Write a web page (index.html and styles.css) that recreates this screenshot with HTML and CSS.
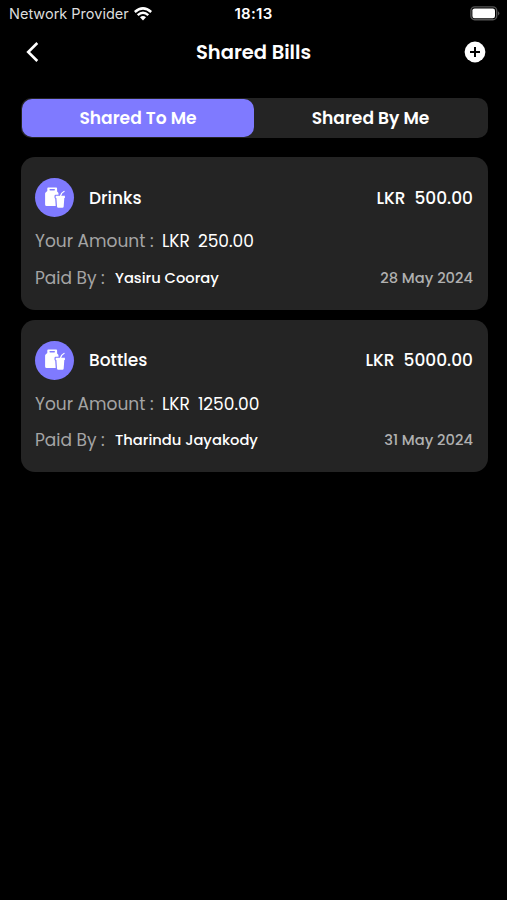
FILE: index.html
```html
<!DOCTYPE html>
<html lang="en">
<head>
  <meta charset="UTF-8">
  <meta name="viewport" content="width=device-width, initial-scale=1.0">
  <title>Shared Bills</title>
  <link rel="stylesheet" href="styles.css">
</head>
<body>

<svg class="sprite" width="0" height="0">
  <symbol id="drinkIcon" viewBox="0 0 22 22">
    <path fill="#fff" fill-rule="evenodd" d="M4.2 0.5h8q0.9 0 0.9 0.9v3l1 1.2q0.4 0.5 0.4 1.2v1h-2.8q-1.2 0-1.2 1.2v1.4q0 0.8 0.7 1.1l0.5 7.5H2.6q-1.5 0-1.5-1.5V6.8q0-0.7 0.5-1.3l1.7-1.4V1.4q0-0.9 0.9-0.9zM6.2 2.1q-0.8 0-0.8 0.7t0.8 0.7h4q0.8 0 0.8-0.7t-0.8-0.7z"/>
    <path fill="#fff" d="M11.7 8.8h9.2v2.2h-0.6l-0.6 8.5q-0.1 1.3-1.3 1.3h-4.1q-1.2 0-1.3-1.3l-0.6-8.5h-0.7z"/>
    <path fill="none" stroke="#fff" stroke-width="1.2" stroke-linecap="round" d="M16.6 8.8l1-2.4 2.5-2"/>
  </symbol>
</svg>

<div class="status-bar">
  <div class="network">
    <span class="provider">Network Provider</span>
    <svg class="wifi" viewBox="0 0 18 14" width="18" height="14" fill="none" stroke="#fff" stroke-width="2.5">
      <path d="M0.8 5Q9-2.2 17.2 5"/>
      <path d="M3.7 8.1Q9 3.4 14.3 8.1"/>
      <path fill="#fff" stroke="none" d="M6 10.2q3-2.5 6 0l-3 3.4z"/>
    </svg>
  </div>
  <span class="time">18:13</span>
  <svg class="battery" viewBox="0 0 31 15" width="31" height="15">
    <rect x="1.9" y="0.9" width="25.8" height="12.8" rx="3.8" fill="none" stroke="#555" stroke-width="1.4"/>
    <rect x="3.4" y="2.4" width="22.6" height="9.8" rx="2.2" fill="#fff"/>
    <path d="M29 5.2q2.8 2.2 0 4.4z" fill="#555"/>
  </svg>
</div>

<div class="header">
  <svg class="back" viewBox="0 0 14 22" width="14" height="22">
    <path d="M12.3 2L3.2 11l9.1 9" fill="none" stroke="#fff" stroke-width="2.6"/>
  </svg>
  <h1>Shared Bills</h1>
  <svg class="add" viewBox="0 0 22 22" width="22" height="22">
    <circle cx="11" cy="11" r="10.4" fill="#fff"/>
    <path d="M11 6v10M6 11h10" stroke="#000" stroke-width="2"/>
  </svg>
</div>

<div class="tabs">
  <div class="tab active">Shared To Me</div>
  <div class="tab">Shared By Me</div>
</div>

<div class="bills">
  <div class="bill">
    <div class="bill-top">
      <div class="bill-icon"><svg width="22" height="22"><use href="#drinkIcon"/></svg></div>
      <span class="bill-name">Drinks</span>
      <span class="bill-total"><span>LKR</span><span>500.00</span></span>
    </div>
    <div class="bill-row">
      <span class="amount-label">Your Amount :</span>
      <span class="amount"><span>LKR</span><span>250.00</span></span>
    </div>
    <div class="bill-row">
      <span class="paid-label">Paid By :</span>
      <span class="payer">Yasiru Cooray</span>
      <span class="date">28 May 2024</span>
    </div>
  </div>

  <div class="bill">
    <div class="bill-top">
      <div class="bill-icon"><svg width="22" height="22"><use href="#drinkIcon"/></svg></div>
      <span class="bill-name">Bottles</span>
      <span class="bill-total"><span>LKR</span><span>5000.00</span></span>
    </div>
    <div class="bill-row">
      <span class="amount-label">Your Amount :</span>
      <span class="amount"><span>LKR</span><span>1250.00</span></span>
    </div>
    <div class="bill-row">
      <span class="paid-label">Paid By :</span>
      <span class="payer">Tharindu Jayakody</span>
      <span class="date">31 May 2024</span>
    </div>
  </div>
</div>

</body>
</html>
```
FILE: styles.css
```css
* {
  box-sizing: border-box;
}

body {
  margin: 0;
  min-height: 100vh;
  background: #000;
  color: #fff;
  font-family: Poppins, Inter, sans-serif;
  white-space: nowrap;
}

svg {
  display: block;
  flex-shrink: 0;
}

.sprite {
  display: none;
}

.status-bar {
  display: grid;
  grid-template-columns: 1fr auto 1fr;
  align-items: center;
  height: 27px;
  padding: 0 7px 0 7px;
  font-family: Inter, sans-serif;
  font-size: 14.5px;
}

.network {
  display: flex;
  align-items: center;
  gap: 5px;
  padding-left: 2px;
}

.provider {
  color: #ddd;
}

.time {
  font-size: 15px;
  font-weight: 600;
  letter-spacing: 0.3px;
}

.battery {
  justify-self: end;
}

.header {
  display: flex;
  align-items: center;
  justify-content: space-between;
  height: 50px;
  padding: 0 21px 0 25px;
}

h1 {
  margin: 0 0 0 4px;
  font-size: 19.5px;
  font-weight: 600;
}

.tabs {
  display: grid;
  grid-template-columns: 232px 1fr;
  height: 40px;
  margin: 21px 19px 0 21px;
  padding: 1px;
  border-radius: 10px;
  background: #242424;
}

.tab {
  display: flex;
  align-items: center;
  justify-content: center;
  border-radius: 10px;
  font-size: 17.1px;
  font-weight: 600;
}

.tab.active {
  background: #7f7aff;
}

.bills {
  display: flex;
  flex-direction: column;
  gap: 10px;
  margin: 19px 19px 0 21px;
}

.bill {
  height: 152.5px;
  padding: 21px 15px 0 14px;
  border-radius: 14px;
  background: #242424;
}

.bill-top {
  display: flex;
  align-items: center;
  height: 39px;
  margin-bottom: 6px;
  font-size: 17px;
  font-weight: 500;
}

.bill-icon {
  display: flex;
  align-items: center;
  justify-content: center;
  width: 39px;
  height: 39px;
  margin-right: 15px;
  border-radius: 50%;
  background: #7f7aff;
}

.bill-total {
  display: flex;
  gap: 9px;
  margin-left: auto;
}

.bill-row {
  display: flex;
  align-items: center;
  height: 36.5px;
}

.amount-label, .paid-label {
  color: #a5a5a5;
  font-size: 17px;
}

.amount-label {
  width: 127px;
}

.paid-label {
  width: 80px;
}

.amount {
  display: flex;
  gap: 8px;
  font-size: 17px;
}

.payer, .date {
  padding-top: 1px;
  font-size: 14.7px;
  font-weight: 500;
}

.date {
  margin-left: auto;
  color: #b0b0b0;
}
```
